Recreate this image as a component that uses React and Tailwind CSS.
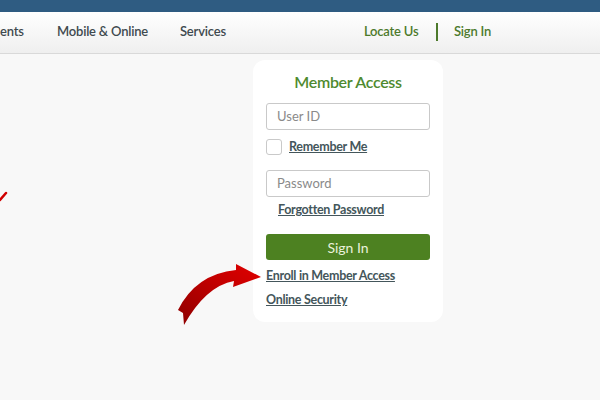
import React from 'react';

const font = { fontFamily: 'Lato, "Open Sans", sans-serif' };

const App = () => {
  return (
    <div className="relative w-[600px] h-[400px] overflow-hidden bg-[#f8f8f8]" style={font}>
      {/* Top strip */}
      <div className="h-[12px] bg-[#2f5c82]"></div>

      {/* Nav */}
      <div className="h-[42px] flex items-center pb-[1px] bg-gradient-to-b from-white to-[#efefef] border-b border-[#d9d9d9] text-[13px] font-semibold tracking-[-0.2px]">
        <span className="w-[57px] text-[#3f4a4f]">ents</span>
        <span className="w-[123px] text-[#3f4a4f]">Mobile &amp; Online</span>
        <span className="w-[184px] text-[#3f4a4f]">Services</span>
        <span className="w-[72px] text-[#4d7a2c]">Locate Us</span>
        <span className="w-[2px] h-[18px] bg-[#4d7a2c]"></span>
        <span className="ml-[16px] text-[#4d7a2c]">Sign In</span>
      </div>

      {/* Main */}
      <div className="pl-[253px] pt-[6px]">
        <div className="w-[190px] h-[262px] bg-white rounded-[12px] px-[13px] pt-[11px]">
          <h2 className="text-center text-[16px] font-semibold tracking-[-0.3px] text-[#4e8a2e] leading-[22px]">Member Access</h2>
          <div className="mt-[10px] h-[27px] border border-[#c9c9c9] rounded-[3px] flex items-center pl-[10px] text-[13px] text-[#8a8a8a]">User ID</div>
          <div className="mt-[9px] h-[16px] flex items-center">
            <span className="w-[16px] h-[16px] border border-[#c9c9c9] rounded-[3px] bg-white"></span>
            <span className="ml-[7px] text-[12.5px] font-bold tracking-[-0.3px] text-[#44565b] underline leading-[16px]">Remember Me</span>
          </div>
          <div className="mt-[15px] h-[27px] border border-[#c9c9c9] rounded-[3px] flex items-center pl-[10px] text-[13px] text-[#8a8a8a]">Password</div>
          <div className="mt-[4px] pl-[12px] text-[12.5px] font-bold tracking-[-0.3px] text-[#44565b] underline leading-[18px]">Forgotten Password</div>
          <div className="mt-[15px] h-[26px] rounded-[3px] bg-[#4d8121] flex items-center justify-center text-[14px] text-[#eaf2dc]">Sign In</div>
          <div className="mt-[7px] text-[12.5px] font-bold tracking-[-0.3px] text-[#44565b] underline leading-[18px]">Enroll in Member Access</div>
          <div className="mt-[6px] text-[12.5px] font-bold tracking-[-0.3px] text-[#44565b] underline leading-[18px]">Online Security</div>
        </div>
      </div>

      {/* Red arrow overlay */}
      <svg className="absolute inset-0 pointer-events-none" width="600" height="400" viewBox="0 0 600 400">
        <defs>
          <linearGradient id="ar" x1="0" y1="1" x2="1" y2="0">
            <stop offset="0" stopColor="#8e0000" />
            <stop offset="0.6" stopColor="#c40000" />
            <stop offset="1" stopColor="#e00000" />
          </linearGradient>
        </defs>
        <path
          d="M178 310 Q196 274 236 270 L236 264 L261 277 L233 287 L234 281 Q206 286 184 325 L183 313 Z"
          fill="url(#ar)"
        />
        <path d="M0 200 L6 193" stroke="#d00000" strokeWidth="2.5" strokeLinecap="round" />
      </svg>
    </div>
  );
};

export default App;
